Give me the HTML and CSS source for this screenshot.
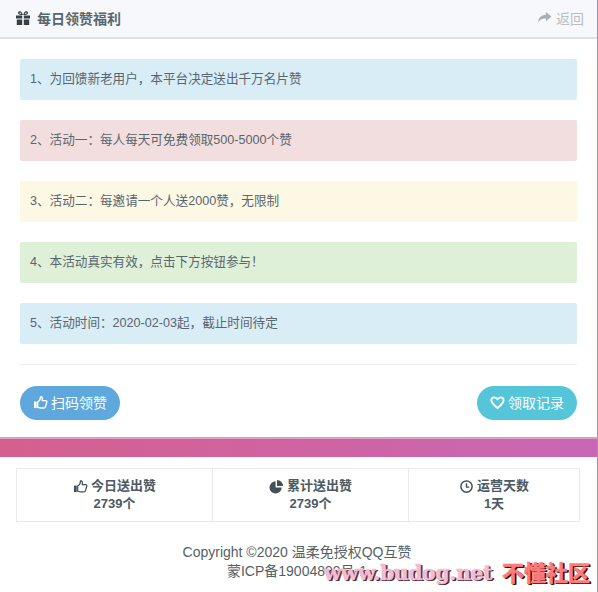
FILE: index.html
```html
<!DOCTYPE html>
<html lang="zh">
<head>
<meta charset="utf-8">
<title>每日领赞福利</title>
<link rel="stylesheet" href="styles.css">
</head>
<body>
<div class="page">
  <section class="panel">
    <header class="panel-head">
      <h1 class="panel-title">
        <svg class="ico ico-gift" viewBox="0 0 14 14"><path d="M0 4.500h6.200V7.500H0zM7.800 4.500H14V7.500H7.800zM.8 8.500h5.400V14H.8zM7.800 8.500h5.400V14H7.800z"/><path fill-rule="evenodd" d="M6.700 4C4.500 4 2 3.500 2 1.900 2 .6 3.500 0 4.700.5 5.800 1 6.700 2.500 6.700 4zM4 1.600c-.8 0-.8 1 0 1.200l1.300.2C5 2.300 4.500 1.600 4 1.600zM7.300 4c0-1.500.9-3 2-3.500C10.500 0 12 .6 12 1.900 12 3.500 9.500 4 7.300 4zM10 1.600c-.5 0-1 .7-1.300 1.400L10 2.800c.8-.2.800-1.200 0-1.200z"/></svg>
        每日领赞福利
      </h1>
      <a class="back" href="#">
        <svg class="ico ico-back" viewBox="0 0 16 14"><path d="M9.500 1l6 5-6 5V8C5.500 8 3 9 1 12.500 1.300 8 3.800 4.300 9.500 4z"/></svg>
        返回
      </a>
    </header>
    <div class="panel-body">
      <div class="notes">
        <p class="note note-blue">1、为回馈新老用户，本平台决定送出千万名片赞</p>
        <p class="note note-red">2、活动一：每人每天可免费领取500-5000个赞</p>
        <p class="note note-yellow">3、活动二：每邀请一个人送2000赞，无限制</p>
        <p class="note note-green">4、本活动真实有效，点击下方按钮参与！</p>
        <p class="note note-blue">5、活动时间：2020-02-03起，截止时间待定</p>
      </div>
      <hr class="rule">
      <div class="actions">
        <a class="btn btn-blue" href="#">
          <svg class="ico ico-btn" viewBox="0 0 16 16"><path d="M1 7h3v7H1z"/><path fill="none" stroke="currentColor" stroke-width="1.500" stroke-linejoin="round" d="M5 7.500c1.500-1 3-3 3-5.500 1.500-.5 2.500 1 1.800 4h3.700c1 0 1.500.8 1.200 1.700l-1.500 5c-.2.800-.8 1.100-1.500 1.100H8c-1.300 0-2-.6-3-.8z"/></svg>
          <span class="btn-text">扫码领赞</span>
        </a>
        <a class="btn btn-cyan" href="#">
          <svg class="ico ico-btn" viewBox="0 0 16 16"><path fill="none" stroke="currentColor" stroke-width="2" stroke-linejoin="round" d="M8 14C4 10.500 1.500 8.500 1.500 5.500 1.500 3.500 3 2.500 4.500 2.500 6 2.500 7.300 3.300 8 4.700 8.700 3.300 10 2.500 11.500 2.500 13 2.500 14.500 3.500 14.500 5.500 14.500 8.500 12 10.500 8 14z"/></svg>
          <span class="btn-text">领取记录</span>
        </a>
      </div>
    </div>
  </section>
  <div class="band"></div>
  <section class="stats">
    <div class="stat">
      <div class="stat-label">
        <svg class="ico ico-stat" viewBox="0 0 16 16"><path d="M1 7h3v7H1z"/><path fill="none" stroke="currentColor" stroke-width="1.300" stroke-linejoin="round" d="M5 7.500c1.500-1 3-3 3-5.500 1.500-.5 2.500 1 1.800 4h3.700c1 0 1.500.8 1.200 1.700l-1.500 5c-.2.800-.8 1.100-1.500 1.100H8c-1.300 0-2-.6-3-.8z"/></svg>
        今日送出赞
      </div>
      <div class="stat-value">2739个</div>
    </div>
    <div class="stat">
      <div class="stat-label">
        <svg class="ico ico-stat" viewBox="0 0 16 16"><path d="M7 2.500a6.500 6.500 0 1 0 6.500 6.500H7z"/><path d="M8.500 1v6.500H15A6.500 6.500 0 0 0 8.500 1z"/></svg>
        累计送出赞
      </div>
      <div class="stat-value">2739个</div>
    </div>
    <div class="stat">
      <div class="stat-label">
        <svg class="ico ico-stat" viewBox="0 0 16 16"><circle cx="8" cy="8" r="6" fill="none" stroke="currentColor" stroke-width="1.600"/><path fill="none" stroke="currentColor" stroke-width="1.500" d="M8 4.500V8.700H11"/></svg>
        运营天数
      </div>
      <div class="stat-value">1天</div>
    </div>
  </section>
  <footer class="foot">
    <p class="foot-line">Copyright ©2020 温柔免授权QQ互赞</p>
    <p class="foot-line">蒙ICP备19004899号-1</p>
    <div class="mark"><span class="mark-url">www.budog.net</span><span class="mark-cn">不懂社区</span></div>
  </footer>
</div>
</body>
</html>
```

FILE: styles.css
```css
* { box-sizing: border-box; }
html, body { margin: 0; padding: 0; height: 100%; background: #fff; overflow: hidden; }
body {
  font-family: "Liberation Sans", "Noto Sans CJK SC", sans-serif;
  font-size: 13px;
  color: #58666e;
}
.page {
  position: relative;
  width: 598px;
  height: 592px;
  border-right: 1px solid #b583b5;
  background: #fff;
}
.panel-head {
  height: 39px;
  padding: 0 13px 2px 16px;
  display: flex;
  align-items: center;
  justify-content: space-between;
  background: #f6f8fb;
  border-bottom: 2px solid #dee1e7;
}
.panel-title {
  margin: 0;
  display: flex;
  align-items: center;
  gap: 7px;
  font-size: 14px;
  font-weight: bold;
  color: #58666e;
}
.ico { display: block; fill: currentColor; flex: none; }
.ico-gift { width: 14px; height: 14px; color: #363f44; }
.back { display: flex; align-items: center; gap: 4px; color: #b9bfc3; text-decoration: none; font-size: 14px; }
.ico-back { width: 15px; height: 13px; color: #a9afb3; }
.panel-body { padding: 20px 20px 0; }
.notes { display: flex; flex-direction: column; gap: 20px; }
.note { margin: 0; height: 41px; padding: 0 10px 4px; display: flex; align-items: center; border-radius: 2px; font-size: 12.6px; }
.note-blue { background: #d9edf7; }
.note-red { background: #f2dede; }
.note-yellow { background: #fcf8e3; }
.note-green { background: #dff0d8; }
.rule { margin: 20px 0 21px; border: 0; border-top: 1px solid #eceef0; }
.actions { display: flex; justify-content: space-between; }
.btn {
  width: 100px;
  height: 34px;
  border-radius: 17px;
  display: flex;
  align-items: center;
  justify-content: center;
  gap: 3px;
  color: #fff;
  text-decoration: none;
  font-size: 14px;
}
.btn-text { margin-top: -3px; }
.btn-blue { background: #5fa8de; }
.btn-cyan { background: #55c6da; }
.ico-btn { width: 15px; height: 15px; margin-top: -2px; }
.band {
  height: 20px;
  margin-top: 17px;
  background: linear-gradient(90deg, #d5608f, #c967b5);
  border-top: 2px solid #dc9fc0;
}
.stats {
  margin: 11px 17px 0 16px;
  height: 54px;
  display: grid;
  grid-template-columns: 195px 196px 1fr;
  border: 1px solid #e8eaec;
}
.stat {
  display: flex;
  flex-direction: column;
  align-items: center;
  justify-content: center;
  font-weight: bold;
  line-height: 18px;
  color: #4d5a62;
  border-left: 1px solid #e8eaec;
}
.stat:first-child { border-left: 0; }
.stat-label { display: flex; align-items: center; gap: 3px; }
.ico-stat { width: 15px; height: 15px; color: #454f56; }
.foot { margin-top: 21px; padding-right: 3px; text-align: center; color: #555f66; line-height: 19px; font-size: 14px; }
.foot-line { margin: 0; }
.mark {
  position: absolute;
  right: 7px;
  bottom: 8px;
  display: flex;
  align-items: center;
  gap: 10px;
  font-family: "DejaVu Serif", "Noto Sans CJK SC", serif;
  font-weight: bold;
  line-height: 22px;
}
.mark-url { font-size: 20.5px; letter-spacing: -0.45px; color: #f4bcd2; -webkit-text-stroke: 0.5px #f4bcd2; text-shadow: 1px 1px 0 #33202a, 2px 1px 0 #7a4a5e; }
.mark-cn { font-size: 22px; color: #fb7c7c; -webkit-text-stroke: 0.6px #fb7c7c; text-shadow: 1px 1px 0 #300, 2px 1px 0 #500; }
```
